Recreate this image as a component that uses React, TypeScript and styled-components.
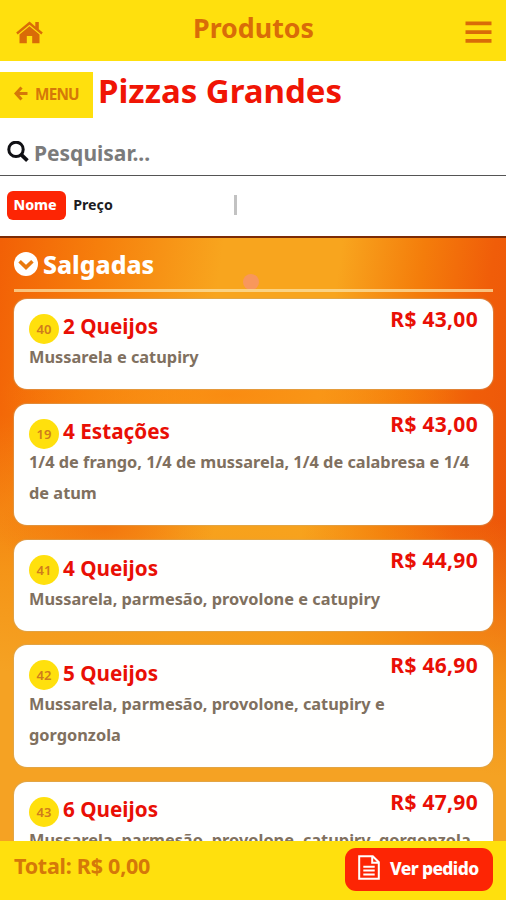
import React from "react";
import styled, { createGlobalStyle } from "styled-components";

const GlobalStyle = createGlobalStyle`
  * { box-sizing: border-box; }
  html, body { margin: 0; padding: 0; overflow: hidden; }
  body {
    font-family: "Noto Sans", "Open Sans", sans-serif;
    font-weight: 700;
    background: #fff;
  }
  button { font: inherit; border: 0; padding: 0; background: none; white-space: nowrap; }
  h1, h2, h3, p { margin: 0; font-weight: inherit; white-space: nowrap; }
  svg { display: block; flex: none; }
`;

const Screen = styled.div`
  width: 506px;
  height: 900px;
  display: flex;
  flex-direction: column;
  overflow: hidden;
`;

const TopBar = styled.header`
  height: 61px;
  flex: none;
  display: grid;
  grid-template-columns: 60px 1fr 60px;
  background: #ffe00d;
  color: #d96c08;
`;

const IconButton = styled.button<{ $end?: boolean }>`
  display: flex;
  justify-content: ${(p) => (p.$end ? "flex-end" : "flex-start")};
  align-items: flex-start;
  padding: ${(p) => (p.$end ? "21px 14px 0 0" : "20.5px 0 0 16px")};
  color: inherit;
`;

const ScreenTitle = styled.h1`
  padding: 9px 0 0 1px;
  text-align: center;
  font-size: 26.8px;
  line-height: 38px;
`;

const CategoryRow = styled.div`
  height: 68px;
  flex: none;
  display: flex;
  align-items: flex-start;
  padding-top: 11px;
`;

const MenuButton = styled.button`
  width: 93px;
  height: 46px;
  display: flex;
  align-items: center;
  gap: 7px;
  padding: 0 0 3px 14px;
  background: #ffe00d;
  color: #d57809;
  font-size: 15.3px;
  font-weight: 700;
  letter-spacing: -0.8px;
`;

const CategoryName = styled.h2`
  margin-left: 5px;
  color: #f01505;
  font-size: 33px;
  line-height: 38px;
`;

const SearchRow = styled.label`
  height: 47px;
  flex: none;
  display: flex;
  align-items: center;
  gap: 5px;
  padding: 0 0 1px 7px;
  border-bottom: 1px solid #555;
`;

const SearchInput = styled.input`
  flex: 1;
  border: 0;
  padding: 2px 0 0;
  outline: 0;
  height: 34px;
  background: transparent;
  font: inherit;
  font-size: 21px;
  &::placeholder { color: #7b7b7b; opacity: 1; }
`;

const SortRow = styled.div`
  height: 62px;
  flex: none;
  display: flex;
  align-items: center;
  padding: 0 0 2px 7px;
  border-bottom: 2px solid #7c2b05;
`;

const SortOption = styled.button<{ $active?: boolean }>`
  height: 29px;
  border-radius: 6px;
  display: flex;
  align-items: center;
  justify-content: center;
  padding: 0 3px 2px 0;
  width: ${(p) => (p.$active ? 59 : 57)}px;
  font-size: 14.2px;
  font-weight: ${(p) => (p.$active ? 800 : 700)};
  letter-spacing: ${(p) => (p.$active ? -0.1 : 0)}px;
  background: ${(p) => (p.$active ? "#fd2504" : "transparent")};
  color: ${(p) => (p.$active ? "#fff" : "#1c1c22")};
`;

const SortDivider = styled.span`
  width: 3px;
  height: 20px;
  margin-left: 111px;
  background: #c2c2c2;
`;

const Products = styled.main`
  position: relative;
  flex: 1;
  min-height: 0;
  overflow: hidden;
  padding: 0 13px 0 14px;
  background:
    radial-gradient(ellipse 110px 50px at 105px 290px, rgba(243, 112, 12, 0.8), transparent),
    radial-gradient(ellipse 230px 60px at 230px 157px, rgba(250, 133, 14, 0.8), transparent),
    linear-gradient(12deg, #f5a223 0%, #f5a223 24%, rgba(245, 155, 26, 0.85) 38%, rgba(245, 145, 20, 0) 60%),
    linear-gradient(98deg, #f26006 0%, #f67f0c 17%, #f8a51e 38%, #f8a51e 58%, #f47d0b 72%, #f05d09 84%, #ea520a 100%);
`;

const Ripple = styled.span`
  position: absolute;
  left: 243px;
  top: 36px;
  width: 16px;
  height: 16px;
  border-radius: 50%;
  background: #f8975c;
`;

const GroupHeader = styled.div`
  position: relative;
  height: 54px;
  display: flex;
  align-items: center;
  gap: 5px;
  border-bottom: 3px solid rgba(252, 226, 164, 0.75);
  color: #fff;
`;

const GroupName = styled.h3`
  padding-top: 1px;
  font-size: 24.8px;
  line-height: 32px;
  font-weight: 800;
`;

const CardList = styled.div`
  display: flex;
  flex-direction: column;
  gap: 14.8px;
  padding-top: 6.5px;
`;

const Card = styled.article`
  flex: none;
  padding: 12.5px 14px 16px 15px;
  border-radius: 13px;
  background: #fffffe;
  box-shadow: 0 0 1px 1px rgba(200, 170, 120, 0.45);
`;

const CardTop = styled.div`
  height: 31px;
  display: flex;
  align-items: flex-start;
`;

const Code = styled.span`
  width: 30px;
  height: 30px;
  margin-top: 2.5px;
  border-radius: 50%;
  display: flex;
  align-items: center;
  justify-content: center;
  background: #ffe00d;
  color: #cf7c1c;
  font-size: 13px;
  font-weight: 600;
`;

const ProductName = styled.h3`
  flex: 1;
  margin: 0 0 0 4px;
  color: #e90f05;
  font-size: 20.7px;
  line-height: 31px;
`;

const Price = styled.span`
  color: #e90f05;
  font-size: 21px;
  line-height: 28px;
  letter-spacing: 0.3px;
  margin: -6.5px 1px 0 0;
  white-space: nowrap;
`;

const Description = styled.p`
  color: #80705f;
  font-size: 16.35px;
  line-height: 31px;
  white-space: pre;
`;

const Footer = styled.footer`
  height: 59px;
  flex: none;
  display: flex;
  align-items: flex-start;
  justify-content: space-between;
  padding: 7px 13px 0 14px;
  background: #ffe00d;
  color: #d57809;
`;

const Total = styled.span`
  font-size: 21.5px;
  line-height: 35px;
  letter-spacing: -0.25px;
`;

const OrderButton = styled.button`
  width: 148px;
  height: 43px;
  display: flex;
  align-items: center;
  gap: 10px;
  padding: 0 0 4px 13px;
  border-radius: 11px;
  background: #fd2504;
  color: #fff;
  font-size: 17.4px;
  font-weight: 800;
  letter-spacing: -0.6px;
`;

const HomeIcon = () => (
  <svg width="27" height="23" viewBox="0 0 27 23" fill="currentColor">
    <path d="M13.5 .6 L.2 11.6 L1.7 13.4 L13.5 3.7 L25.3 13.4 L26.8 11.6 L22.8 8.3 V.9 H19.3 V5.4 Z" />
    <path d="M13.5 5.2 L3.5 13.4 V22.2 H10.8 V15.1 H16.2 V22.2 H23.5 V13.4 Z" />
  </svg>
);

const BarsIcon = () => (
  <svg width="27" height="23" viewBox="0 0 27 23" fill="currentColor">
    <path d="M.5 .5h26v3.8H.5zM.5 9.3h26v3.8H.5zM.5 18h26v3.8H.5z" />
  </svg>
);

const BackIcon = () => (
  <svg width="14" height="15" viewBox="0 0 14 15" fill="none" stroke="currentColor" strokeWidth="3">
    <path d="M7.5 1.4 L2 7.5 L7.5 13.6 M2 7.5 H13.5" />
  </svg>
);

const SearchIcon = () => (
  <svg width="22" height="22" viewBox="0 0 22 22" fill="none" stroke="#101014" strokeWidth="3">
    <circle cx="9" cy="8.4" r="7.2" />
    <path d="M14.2 13.7 L20.4 19.7" strokeWidth="3.8" />
  </svg>
);

const ChevronIcon = () => (
  <svg width="24" height="24" viewBox="0 0 24 24">
    <circle cx="12" cy="12" r="12" fill="#fff" />
    <path d="M5.6 9.2 L12 15.4 L18.4 9.2" fill="none" stroke="#e9790f" strokeWidth="3.6" />
  </svg>
);

const OrderIcon = () => (
  <svg width="22" height="25" viewBox="0 0 22 25" fill="none" stroke="#fff" strokeWidth="2">
    <path d="M1.2 1.2 H14.8 L20.8 7.2 V23.8 H1.2 Z M14.2 1.2 V7.8 H20.8" />
    <path d="M5.3 11.8 H16.7 M5.3 15.6 H16.7 M5.3 19.4 H16.7" />
  </svg>
);

type Product = { code: string; name: string; price: string; description: string };

const products: Product[] = [
  { code: "40", name: "2 Queijos", price: "R$ 43,00", description: "Mussarela e catupiry" },
  {
    code: "19",
    name: "4 Estações",
    price: "R$ 43,00",
    description: "1/4 de frango, 1/4 de mussarela, 1/4 de calabresa e 1/4\nde atum",
  },
  { code: "41", name: "4 Queijos", price: "R$ 44,90", description: "Mussarela, parmesão, provolone e catupiry" },
  {
    code: "42",
    name: "5 Queijos",
    price: "R$ 46,90",
    description: "Mussarela, parmesão, provolone, catupiry e\ngorgonzola",
  },
  {
    code: "43",
    name: "6 Queijos",
    price: "R$ 47,90",
    description: "Mussarela, parmesão, provolone, catupiry, gorgonzola",
  },
];

export default function App() {
  return (
    <>
      <GlobalStyle />
      <Screen>
        <TopBar>
          <IconButton><HomeIcon /></IconButton>
          <ScreenTitle>Produtos</ScreenTitle>
          <IconButton $end><BarsIcon /></IconButton>
        </TopBar>
        <CategoryRow>
          <MenuButton><BackIcon />MENU</MenuButton>
          <CategoryName>Pizzas Grandes</CategoryName>
        </CategoryRow>
        <SearchRow>
          <SearchIcon />
          <SearchInput placeholder="Pesquisar..." />
        </SearchRow>
        <SortRow>
          <SortOption $active>Nome</SortOption>
          <SortOption>Preço</SortOption>
          <SortDivider />
        </SortRow>
        <Products>
          <Ripple />
          <GroupHeader>
            <ChevronIcon />
            <GroupName>Salgadas</GroupName>
          </GroupHeader>
          <CardList>
            {products.map((product) => (
              <Card key={product.code}>
                <CardTop>
                  <Code>{product.code}</Code>
                  <ProductName>{product.name}</ProductName>
                  <Price>{product.price}</Price>
                </CardTop>
                <Description>{product.description}</Description>
              </Card>
            ))}
          </CardList>
        </Products>
        <Footer>
          <Total>Total: R$ 0,00</Total>
          <OrderButton><OrderIcon />Ver pedido</OrderButton>
        </Footer>
      </Screen>
    </>
  );
}
